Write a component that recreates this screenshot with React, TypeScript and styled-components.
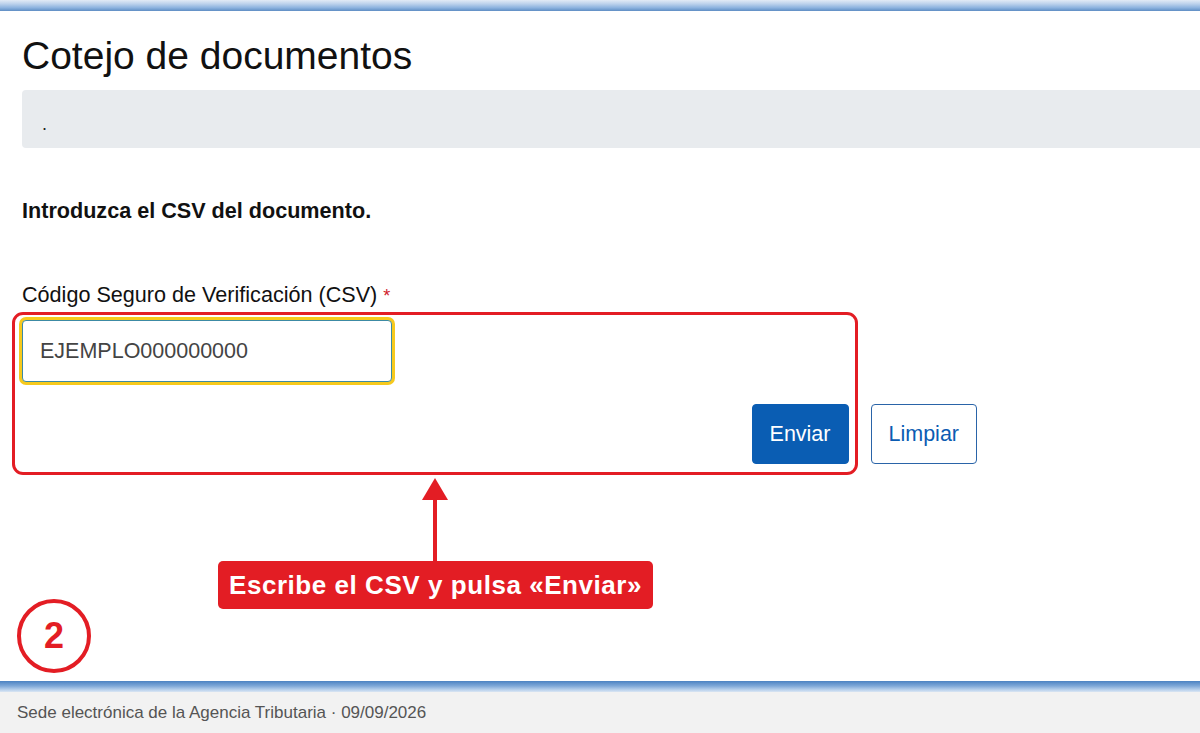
import styled, { createGlobalStyle } from 'styled-components';

const GlobalStyle = createGlobalStyle`
  html, body {
    margin: 0;
    padding: 0;
    background: #ffffff;
  }
  body {
    font-family: "Liberation Sans", Arial, Helvetica, sans-serif;
    color: #111111;
  }
  * {
    box-sizing: border-box;
  }
`;

const ANNOTATION_RED = '#e31d24';

export default function App() {
  return (
    <>
      <GlobalStyle />
      <Page>
        <TopBar />

        <Main>
          <Title>Cotejo de documentos</Title>
          <Breadcrumb>.</Breadcrumb>

          <Intro>Introduzca el CSV del documento.</Intro>

          <Form onSubmit={e => e.preventDefault()}>
            <FieldLabel htmlFor="csv">
              Código Seguro de Verificación (CSV) <Required>*</Required>
            </FieldLabel>
            <CsvInput id="csv" defaultValue="EJEMPLO000000000" />
            <ButtonRow>
              <Button type="submit" $variant="primary">Enviar</Button>
              <Button type="reset" $variant="outline">Limpiar</Button>
            </ButtonRow>
          </Form>
        </Main>

        <Footer>
          <FooterBar />
          <FooterText>Sede electrónica de la Agencia Tributaria · 09/09/2026</FooterText>
        </Footer>

        {/* help overlay: highlight, pointer and step number */}
        <Highlight />
        <Pointer width="30" height="84" viewBox="0 0 30 84">
          <polygon points="15,0 2,22 28,22" fill={ANNOTATION_RED} />
          <rect x="13" y="20" width="4" height="64" fill={ANNOTATION_RED} />
        </Pointer>
        <Callout>Escribe el CSV y pulsa «Enviar»</Callout>
        <StepBadge>2</StepBadge>
      </Page>
    </>
  );
}

// --- Styled Components ---

const Page = styled.div`
  position: relative;
  display: flex;
  flex-direction: column;
  height: 733px;
  overflow: hidden;
`;

const TopBar = styled.div`
  height: 11px;
  flex-shrink: 0;
  background: linear-gradient(to bottom, #e2ebf6 0%, #bcd2ec 35%, #8db3df 70%, #5f8ec4 100%);
`;

const Main = styled.main`
  flex: 1;
  padding: 22px 0 0 22px;
`;

const Title = styled.h1`
  margin: 0;
  font-size: 39px;
  font-weight: 400;
  line-height: 45px;
  color: #111111;
`;

const Breadcrumb = styled.div`
  margin-top: 12px;
  height: 58px;
  padding: 10px 0 0 20px;
  display: flex;
  align-items: center;
  background: #e8ebee;
  border-radius: 4px 0 0 4px;
  font-size: 18px;
  color: #222222;
`;

const Intro = styled.p`
  margin: 50px 0 0;
  font-size: 21.6px;
  font-weight: 700;
  line-height: 25px;
  color: #111111;
`;

const Form = styled.form`
  width: 955px;
  margin-top: 59px;
  display: flex;
  flex-direction: column;
`;

const FieldLabel = styled.label`
  font-size: 21.6px;
  line-height: 25px;
  color: #111111;
`;

const Required = styled.span`
  color: #d0202a;
  font-size: 18px;
`;

const CsvInput = styled.input`
  margin-top: 11px;
  width: 370px;
  height: 62px;
  padding: 0 17px;
  border: 1px solid #3c8aa4;
  border-radius: 4px;
  box-shadow: 0 0 0 3px #f6c91d;
  font-family: "Liberation Sans", Arial, sans-serif;
  font-size: 21.5px;
  color: #444444;
  outline: none;
`;

const ButtonRow = styled.div`
  margin-top: 22px;
  display: flex;
  justify-content: flex-end;
  gap: 22px;
`;

const Button = styled.button<{ $variant: 'primary' | 'outline' }>`
  height: 60px;
  padding: 0 17px;
  border-radius: 4px;
  border: 1px solid ${p => (p.$variant === 'primary' ? '#0a5db3' : '#2a64a8')};
  background: ${p => (p.$variant === 'primary' ? '#0a5db3' : '#ffffff')};
  color: ${p => (p.$variant === 'primary' ? '#ffffff' : '#0b5cb2')};
  font-family: "Liberation Sans", Arial, sans-serif;
  font-size: 21.5px;
  cursor: pointer;
`;

const Footer = styled.footer`
  flex-shrink: 0;
  display: flex;
  flex-direction: column;
  background: #f2f2f2;
`;

const FooterBar = styled.div`
  height: 11px;
  background: linear-gradient(to bottom, #4b82c2 0%, #7ea8d8 45%, #b9d1ec 80%, #dae6f3 100%);
`;

const FooterText = styled.div`
  height: 41px;
  padding-left: 17px;
  display: flex;
  align-items: center;
  font-size: 17px;
  color: #555555;
`;

const Highlight = styled.div`
  position: absolute;
  left: 12px;
  top: 312px;
  width: 846px;
  height: 163px;
  border: 3.5px solid ${ANNOTATION_RED};
  border-radius: 11px;
  pointer-events: none;
`;

const Pointer = styled.svg`
  position: absolute;
  left: 420px;
  top: 478px;
  pointer-events: none;
`;

const Callout = styled.div`
  position: absolute;
  left: 218px;
  top: 561px;
  width: 435px;
  height: 48px;
  display: flex;
  align-items: center;
  justify-content: center;
  background: ${ANNOTATION_RED};
  border-radius: 5px;
  color: #ffffff;
  font-size: 26px;
  font-weight: 700;
  letter-spacing: 0.55px;
  white-space: nowrap;
`;

const StepBadge = styled.div`
  position: absolute;
  left: 17px;
  top: 599px;
  width: 74px;
  height: 74px;
  border: 4px solid ${ANNOTATION_RED};
  border-radius: 50%;
  display: flex;
  align-items: center;
  justify-content: center;
  color: ${ANNOTATION_RED};
  font-size: 36px;
  font-weight: 700;
  background: #ffffff;
`;
